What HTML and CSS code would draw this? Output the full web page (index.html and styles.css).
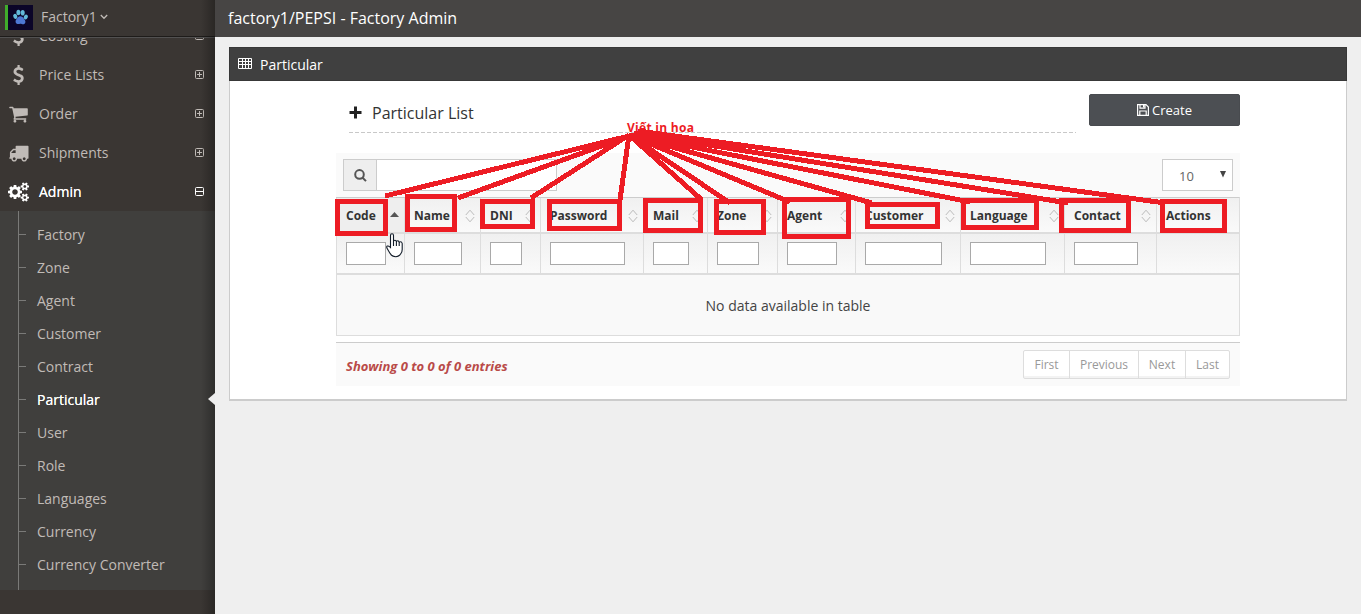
FILE: index.html
```html
<!DOCTYPE html>
<html lang="en">
<head>
<meta charset="utf-8">
<title>factory1/PEPSI - Factory Admin</title>
<link rel="stylesheet" href="styles.css">
</head>
<body>
<svg width="0" height="0" class="defs">
  <symbol id="dollar" viewBox="0 0 1792 1792"><path d="M1362 1185q0 153-99.5 263.5t-258.5 136.5v175q0 14-9 23t-23 9h-135q-13 0-22.5-9.5t-9.5-22.5v-175q-66-9-127.5-31t-101.500-44.500-74-48-46.500-37.500-17.500-18q-17-21-2-41l103-135q7-10 23-12 15-2 24 9l2 2q113 99 243 125 37 8 74 8 81 0 142.500-43t61.500-122q0-28-15-53t-33.500-42-58.500-37.500-66-32-80-32.500q-39-16-61.500-25t-61.500-26.500-62.500-31-56.500-35.500-53.500-42.500-43.500-49-35.500-58-21-66.500-8.500-78q0-138 98-242t255-134v-180q0-13 9.500-22.500t22.500-9.500h135q14 0 23 9t9 23v176q57 6 110.500 23t87 33.500 63.500 37.500 39 29 15 14q17 18 5 38l-81 146q-8 15-23 16-14 3-27-7-3-3-14.500-12t-39-26.500-58.500-32-74.500-26-85.500-11.500q-95 0-155 43t-60 111q0 26 8.500 48t29.500 41.500 39.500 33 56 31 60.500 27 70 27.500q53 20 81 31.500t76 35 75.500 42.500 62 50 53 63.500 31.500 76.500 13 94z"/></symbol>
  <symbol id="cart" viewBox="0 0 1792 1792"><path d="M704 1536q0 52-38 90t-90 38-90-38-38-90 38-90 90-38 90 38 38 90zm896 0q0 52-38 90t-90 38-90-38-38-90 38-90 90-38 90 38 38 90zm128-1088v512q0 24-16.500 42.500t-40.500 21.500l-1044 122q13 60 13 70 0 16-24 64h920q26 0 45 19t19 45-19 45-45 19h-1024q-26 0-45-19t-19-45q0-11 8-31.500t16-36 21.500-40 15.500-29.500l-177-823h-204q-26 0-45-19t-19-45 19-45 45-19h256q16 0 28.500 6.500t19.500 15.500 13 24.500 8 26 5.500 29.500 4.500 26h1201q26 0 45 19t19 45z"/></symbol>
  <symbol id="truck" viewBox="0 0 1792 1792"><path d="M640 1408q0-52-38-90t-90-38-90 38-38 90 38 90 90 38 90-38 38-90zm-384-512h384v-256h-158q-13 0-22 9l-195 195q-9 9-9 22v30zm1280 512q0-52-38-90t-90-38-90 38-38 90 38 90 90 38 90-38 38-90zm256-1088v1024q0 15-4 26.500t-13.500 18.500-16.500 11.500-23.500 6-22.500 2-25.500 0-22.500-.5q0 106-75 181t-181 75-181-75-75-181h-384q0 106-75 181t-181 75-181-75-75-181h-64q-3 0-22.500.5t-25.500 0-22.500-2-23.500-6-16.500-11.500-13.500-18.500-4-26.500q0-26 19-45t45-19v-320q0-8-.5-35t0-38 2.500-34.500 6.500-37 14-30.500 22.500-30l198-198q19-19 50.500-32t58.500-13h160v-192q0-26 19-45t45-19h1024q26 0 45 19t19 45z"/></symbol>
  <symbol id="cogs" viewBox="0 0 1920 1792"><path d="M896 896q0-106-75-181t-181-75-181 75-75 181 75 181 181 75 181-75 75-181zm768 512q0-52-38-90t-90-38-90 38-38 90q0 53 37.500 90.500t90.500 37.500 90.500-37.500 37.500-90.500zm0-1024q0-52-38-90t-90-38-90 38-38 90q0 53 37.500 90.500t90.500 37.500 90.500-37.500 37.500-90.500zm-384 421v185q0 10-7 19.500t-16 10.500l-155 24q-11 35-32 76 34 48 90 115 7 11 7 20 0 12-7 19-23 30-82.500 89.500t-78.500 59.500q-11 0-21-7l-115-90q-37 19-77 31-11 108-23 155-7 24-30 24h-186q-11 0-20-7.500t-10-17.500l-23-153q-34-10-75-31l-118 89q-7 7-20 7-11 0-21-8-144-133-144-160 0-9 7-19 10-14 41-53t47-61q-23-44-35-82l-152-24q-10-1-17-9.500t-7-19.500v-185q0-10 7-19.500t16-10.500l155-24q11-35 32-76-34-48-90-115-7-11-7-20 0-12 7-20 22-30 82-89t79-59q11 0 21 7l115 90q34-18 77-32 11-108 23-154 7-24 30-24h186q11 0 20 7.500t10 17.500l23 153q34 10 75 31l118-89q8-7 20-7 11 0 21 8 144 133 144 160 0 8-7 19-12 16-42 54t-45 60q23 48 34 82l152 23q10 2 17 10.500t7 19.500zm640 533v140q0 16-149 31-12 27-30 52 51 113 51 138 0 4-4 7-122 71-124 71-8 0-46-47t-52-68q-20 2-30 2t-30-2q-14 21-52 68t-46 47q-2 0-124-71-4-3-4-7 0-25 51-138-18-25-30-52-149-15-149-31v-140q0-16 149-31 13-29 30-52-51-113-51-138 0-4 4-7 4-2 35-20t59-34 30-16q8 0 46 46.500t52 67.500q20-2 30-2t30 2q51-71 92-112l6-2q4 0 124 70 4 3 4 7 0 25-51 138 17 23 30 52 149 15 149 31zm0-1024v140q0 16-149 31-12 27-30 52 51 113 51 138 0 4-4 7-122 71-124 71-8 0-46-47t-52-68q-20 2-30 2t-30-2q-14 21-52 68t-46 47q-2 0-124-71-4-3-4-7 0-25 51-138-18-25-30-52-149-15-149-31v-140q0-16 149-31 13-29 30-52-51-113-51-138 0-4 4-7 4-2 35-20t59-34 30-16q8 0 46 46.500t52 67.500q20-2 30-2t30 2q51-71 92-112l6-2q4 0 124 70 4 3 4 7 0 25-51 138 17 23 30 52 149 15 149 31z"/></symbol>
  <symbol id="plusbox" viewBox="0 0 9 9"><path d="M1.500 .5h6q1 0 1 1v6q0 1-1 1h-6q-1 0-1-1v-6q0-1 1-1zM2 4.500h5M4.500 2v5" fill="none" stroke="currentColor"/></symbol>
  <symbol id="minusbox" viewBox="0 0 9 9"><path d="M1.500 .5h6q1 0 1 1v6q0 1-1 1h-6q-1 0-1-1v-6q0-1 1-1zM1 4.500h7" fill="none" stroke="currentColor"/></symbol>
  <symbol id="sort" viewBox="0 0 10 14"><path d="M.8 6L5 1.200 9.200 6M.8 8L5 12.800 9.200 8" fill="none" stroke="#bbb"/></symbol>
</svg>

<div class="app">
  <aside class="sidebar">
    <div class="login">
      <svg class="avatar" viewBox="0 0 28 25"><path fill="#0b0528" d="M3 0h25v25H3z"/><path fill="#40ac2b" d="M0 0h3v25H0z"/><g fill="#62b9d9"><ellipse cx="10.300" cy="11.300" rx="2" ry="2.600" transform="rotate(-25 10.300 11.300)"/><ellipse cx="13.400" cy="7.500" rx="2" ry="2.800"/><ellipse cx="17.700" cy="7.700" rx="2" ry="2.800"/><ellipse cx="20.800" cy="12" rx="2" ry="2.600" transform="rotate(25 20.800 12)"/></g><path fill="#4d78d2" d="M15.500 11.200c2.500 0 3.200 2.300 4.300 3.700 1.300 1.700.5 4.300-1.700 4.300-1.200 0-1.700-.5-2.800-.5-1 0-1.700.5-3 .2-2-.5-2.300-3-.9-4.600 1-1.200 1.800-3.100 4.100-3.100z"/></svg>
      <span>Factory1</span>
      <svg class="caret" viewBox="0 0 8 6"><path d="M.8 1L4 4.300 7.200 1" fill="none" stroke="currentColor" stroke-width="1.300"/></svg>
    </div>
    <nav class="menu">
      <a class="item"><svg class="ico"><use href="#dollar"/></svg><span>Costing</span><svg class="box"><use href="#minusbox"/></svg></a>
      <a class="item"><svg class="ico"><use href="#dollar"/></svg><span>Price Lists</span><svg class="box"><use href="#plusbox"/></svg></a>
      <a class="item"><svg class="ico"><use href="#cart"/></svg><span>Order</span><svg class="box"><use href="#plusbox"/></svg></a>
      <a class="item"><svg class="ico"><use href="#truck"/></svg><span>Shipments</span><svg class="box"><use href="#plusbox"/></svg></a>
      <a class="item open"><svg class="ico"><use href="#cogs"/></svg><span>Admin</span><svg class="box"><use href="#minusbox"/></svg></a>
      <div class="sub">
        <a>Factory</a><a>Zone</a><a>Agent</a><a>Customer</a><a>Contract</a><a class="active">Particular</a><a>User</a><a>Role</a><a>Languages</a><a>Currency</a><a>Currency Converter</a>
      </div>
    </nav>
  </aside>

  <main class="main">
    <header class="topbar">factory1/PEPSI - Factory Admin</header>
    <section class="widget">
      <div class="widget-head">
        <svg width="14" height="11" viewBox="0 0 14 11"><path d="M.5 .5h13v10H.5zM.5 3.500h13M.5 6.500h13M4.500 1v9M7.500 1v9M10.500 1v9" fill="none" stroke="#fff"/></svg>
        <span>Particular</span>
      </div>
      <div class="widget-body">
        <div class="title-row">
          <h1><svg width="13" height="13" viewBox="0 0 13 13"><path d="M6.500 .5v12M.5 6.500h12" stroke="#222" stroke-width="3"/></svg><span>Particular List</span></h1>
          <button class="create"><svg width="12" height="12" viewBox="0 0 12 12"><path d="M.6 .6h8.400l2.400 2.400v8.400H.6zM3 .6v3.600h5V.6M2.800 11V7h6.400v4" fill="none" stroke="#fff" stroke-width="1.200"/><path d="M6 1h1.500v2.500H6z" fill="#fff"/></svg>Create</button>
        </div>
        <div class="toolbar">
          <div class="search"><span class="addon"><svg width="13" height="13" viewBox="0 0 13 13"><path d="M5.500 1.100a4.300 4.300 0 1 1 0 8.600 4.300 4.300 0 0 1 0-8.600zM8.600 8.700l3.400 3.400" fill="none" stroke="#555" stroke-width="2"/></svg></span><input></div>
          <div class="length"><span>10</span><svg width="6" height="7" viewBox="0 0 6 7"><path d="M0 0h6L3 6.500z" fill="#444"/></svg></div>
        </div>
        <div class="grid">
          <div class="th sorted"><span>Code</span><svg class="asc" viewBox="0 0 9 5"><path d="M0 5L4.500 0 9 5z" fill="#555"/></svg></div>
          <div class="th"><span>Name</span><svg><use href="#sort"/></svg></div>
          <div class="th"><span>DNI</span><svg><use href="#sort"/></svg></div>
          <div class="th"><span>Password</span><svg><use href="#sort"/></svg></div>
          <div class="th"><span>Mail</span><svg><use href="#sort"/></svg></div>
          <div class="th"><span>Zone</span><svg><use href="#sort"/></svg></div>
          <div class="th"><span>Agent</span><svg><use href="#sort"/></svg></div>
          <div class="th"><span>Customer</span><svg><use href="#sort"/></svg></div>
          <div class="th"><span>Language</span><svg><use href="#sort"/></svg></div>
          <div class="th"><span>Contact</span><svg><use href="#sort"/></svg></div>
          <div class="th"><span>Actions</span></div>
          <div class="td"><input style="width:40px"></div>
          <div class="td"><input style="width:48px"></div>
          <div class="td"><input style="width:32px"></div>
          <div class="td"><input style="width:75px"></div>
          <div class="td"><input style="width:36px"></div>
          <div class="td"><input style="width:42px"></div>
          <div class="td"><input style="width:50px"></div>
          <div class="td"><input style="width:77px"></div>
          <div class="td"><input style="width:76px"></div>
          <div class="td"><input style="width:64px"></div>
          <div class="td"></div>
          <div class="empty">No data available in table</div>
        </div>
        <div class="foot">
          <span class="info">Showing 0 to 0 of 0 entries</span>
          <div class="pages"><a class="p1">First</a><a class="p2">Previous</a><a class="p3">Next</a><a class="p4">Last</a></div>
        </div>
      </div>
    </section>
  </main>
</div>

<svg class="notes" viewBox="0 0 1361 614" width="1361" height="614">
  <text x="627" y="132" textLength="67">Viết in hoa</text>
  <g shape-rendering="crispEdges">
    <rect x="337.500" y="201.500" width="48" height="32"/>
    <rect x="407.500" y="196.500" width="47" height="33"/>
    <rect x="482.500" y="201.500" width="50" height="25"/>
    <rect x="549.500" y="201.500" width="70" height="27"/>
    <rect x="645.500" y="200.500" width="55" height="30"/>
    <rect x="716.500" y="201.500" width="47" height="31"/>
    <rect x="784.500" y="199.500" width="64" height="37"/>
    <rect x="867.500" y="204.500" width="70" height="22"/>
    <rect x="963.500" y="200.500" width="73" height="27"/>
    <rect x="1061.500" y="200.500" width="67" height="30"/>
    <rect x="1162.500" y="201.500" width="62" height="29"/>
    <path d="M385 196L629 136M458 198L629 136M531 198L629 135M620 200L629 135M629 135L702 200M629 135L730 203M629 135L790 202M629 135L872 203M631 135L970 202M634 133L1068 203M638 131L1165 203"/>
  </g>
</svg>
<svg class="cursor" width="18" height="25" viewBox="0 0 18 25"><path d="M4.500 14.500V2.500q0-1.700 1.500-1.700t1.500 1.700v6q0-1.300 1.400-1.300T10.400 9q0-1.200 1.300-1.200T13.200 9.800q0-1.100 1.300-1.100t1.700 1.800v6q0 2.500-1.400 4.200-2 3-5 3-4 0-6-3.700L1.300 15.700q-1.200-2 0-2.600 1.200-.4 2.200.6zM7.500 8v5M10.400 9v4M13.200 9.500V13" fill="#fff" stroke="#111b28" stroke-width="1.100"/></svg>
</body>
</html>
```

FILE: styles.css
```css
* { box-sizing: border-box; }
body { margin: 0; width: 1361px; height: 614px; overflow: hidden; font: 14px "Open Sans", "Noto Sans", sans-serif; }
.defs { position: absolute; }
svg { display: block; flex: none; fill: currentColor; }
.app { display: flex; height: 614px; }

.sidebar { width: 215px; height: 614px; overflow: hidden; flex: none; color: #c0bbb7; background: #3a3633; position: relative; }
.sidebar::after { content: ""; position: absolute; top: 0; right: 0; bottom: 0; width: 14px; background: linear-gradient(to right, rgba(0,0,0,0), rgba(0,0,0,.28)); }
.login { height: 38px; padding: 0 0 3px 5px; display: flex; align-items: center; border-bottom: 1px solid #525151; box-shadow: inset 0 -1px #1e1c1a; }
.login span { padding-bottom: 2px; }
.avatar { width: 28px; height: 25px; margin-right: 8px; }
.caret { width: 8px; height: 6px; margin-left: 3px; }
.menu { height: 576px; overflow: hidden; }
.item { height: 39px; padding: 0 10px 0 8px; display: flex; align-items: center; }
.item:first-child { margin-top: -22px; }
.item span { flex: 1; margin-left: 10px; }
.ico { width: 21px; height: 20px; }
.box { width: 9px; height: 9px; margin-right: 1px; }
.open { color: #fff; text-shadow: 0 0 .5px #fff; }
.sub { height: 379px; padding: 7px 0 9px; background: linear-gradient(#7a7a78, #7a7a78) 18px 0 / 1px 100% no-repeat #403f3d; }
.sub a { height: 33px; padding-left: 18px; display: flex; align-items: center; }
.sub a::before { content: ""; width: 8px; height: 1px; margin-right: 11px; background: #7a7a78; }
.sub .active { color: #fff; position: relative; text-shadow: 0 0 .5px #fff; }
.sub .active::after { content: ""; position: absolute; z-index: 2; right: 0; top: 10px; border: solid transparent; border-width: 6px 7px 6px 0; border-right-color: #eee; }

.main { flex: 1; background: #efefef; }
.topbar { height: 37px; padding: 0 0 1px 13px; display: flex; align-items: center; color: #fff; background: #474544; font-size: 16px; }
.widget { width: 1118px; margin: 10px 0 0 14px; }
.widget-head { height: 34px; padding-left: 8px; display: flex; align-items: center; gap: 8px; color: #fff; background: #404040; border: 1px solid #383838; }
.widget-head svg { margin-bottom: 2px; }
.widget-body { height: 320px; padding: 13px 106px 0; background: #fff; border: solid #ccc; border-width: 0 1px 2px; }
.title-row { height: 59px; display: flex; justify-content: space-between; align-items: flex-start; }
h1 { width: 727px; height: 39px; margin: 0 0 0 13px; padding-bottom: 2px; display: flex; align-items: center; gap: 10px; font-size: 16px; font-weight: 400; color: #333; background: repeating-linear-gradient(to right, #c8c8c8 0 4px, transparent 4px 6px) 0 100% / 100% 1px no-repeat; }
.create { width: 151px; height: 32px; padding: 0; display: flex; justify-content: center; align-items: center; gap: 3px; color: #fff; font: 13px "Open Sans", sans-serif; background: #4c4f53; border: 1px solid #484b4f; border-radius: 2px; }
.toolbar { height: 44px; padding: 6px 7px; display: flex; justify-content: space-between; background: #fafafa; }
.search { width: 214px; height: 32px; display: flex; border: 1px solid #ccc; }
.addon { width: 33px; padding-left: 1px; display: grid; place-items: center; background: #eee; border-right: 1px solid #ccc; }
.search input { flex: 1; min-width: 0; border: 0; background: #fff; }
.length { width: 71px; height: 32px; padding: 0 6px 0 16px; display: flex; align-items: center; justify-content: space-between; background: #fff; border: 1px solid #ccc; color: #666; font-size: 13px; }
.length span { margin-top: 2px; }
.length svg { margin-bottom: 1px; }
.grid { width: 904px; display: grid; grid-template-columns: 68px 76px 60px 103px 64px 70px 78px 105px 104px 92px 83px; grid-template-rows: 36px 41px 61px; border-top: 1px solid #ccc; border-right: 1px solid #ddd; }
.th { min-width: 0; border-left: 1px solid #ddd; border-bottom: 2px solid #ddd; padding: 0 5px 0 9px; display: flex; align-items: center; justify-content: space-between; font-size: 12px; font-weight: 700; color: #333; background: linear-gradient(#f0f0f0, #fafafa); }
.th span { padding-top: 1px; }
.th svg { width: 10px; height: 14px; margin-top: 1px; }
.th .asc { width: 9px; height: 5px; margin: 0 0 2px; }
.sorted { background: #eee; }
.td { border-left: 1px solid #ddd; border-bottom: 2px solid #ddd; padding: 8px 0 0 9px; background: linear-gradient(#f0f0f0, #fafafa); }
.td input { display: block; height: 23px; padding: 0; border: 1px solid #a9a9a9; background: #fff; }
.empty { grid-column: 1 / -1; border: 1px solid #ddd; border-width: 0 0 1px 1px; display: grid; place-items: center; background: #f9f9f9; color: #444; }
.foot { height: 44px; margin-top: 6px; padding: 7px 10px 0; display: flex; justify-content: space-between; background: #fafafa; border-top: 1px solid #ccc; }
.info { padding-top: 7px; color: #b94a48; font-size: 13px; font-weight: 700; font-style: italic; }
.pages { width: 207px; height: 29px; display: flex; background: #fff; border: 1px solid #ddd; border-radius: 2px; box-shadow: inset 0 -2px #f3f3f3; color: #999; font-size: 12px; }
.pages a { display: grid; place-items: center; border-right: 1px solid #ddd; }
.p1 { width: 46px; }
.p2 { width: 69px; }
.p3 { width: 47px; }
.pages .p4 { flex: 1; border: 0; }

.notes { position: absolute; left: 0; top: 0; }
.notes rect, .notes path { fill: none; stroke: #ed1c24; stroke-width: 5; }
.notes text { fill: #ed1c24; font: 700 12px "Open Sans", sans-serif; }
.cursor { position: absolute; left: 386px; top: 233px; }
```
